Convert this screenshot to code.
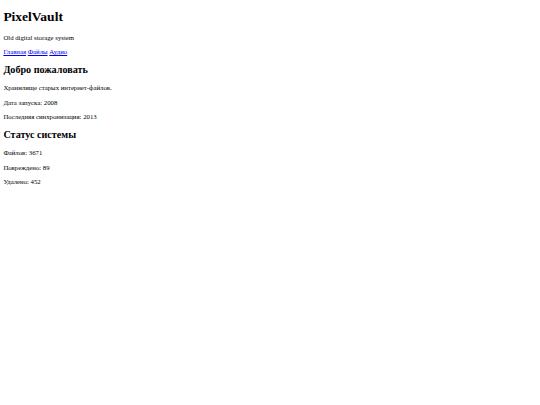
export default function App() {
  return (
    <div className="mx-[3.375px] mt-[3.375px] font-['Liberation_Serif','Times_New_Roman',serif] text-[6.75px] leading-[1.149] text-black">
      <h1 className="my-[9.045px] text-[13.5px] font-bold">PixelVault</h1>
      <p className="my-[6.75px]">Old digital storage system</p>
      <nav className="my-[6.75px]">
        <a href="#" className="text-[#0000ee] underline">Главная</a>{" "}
        <a href="#" className="text-[#0000ee] underline">Файлы</a>{" "}
        <a href="#" className="text-[#0000ee] underline">Аудио</a>
      </nav>
      <h2 className="my-[8.4px] text-[10.125px] font-bold">Добро пожаловать</h2>
      <p className="my-[6.75px]">Хранилище старых интернет-файлов.</p>
      <p className="my-[6.75px]">Дата запуска: 2008</p>
      <p className="my-[6.75px]">Последняя синхронизация: 2013</p>
      <h2 className="my-[8.4px] text-[10.125px] font-bold">Статус системы</h2>
      <p className="my-[6.75px]">Файлов: 3671</p>
      <p className="my-[6.75px]">Повреждено: 89</p>
      <p className="my-[6.75px]">Удалено: 452</p>
    </div>
  );
}
